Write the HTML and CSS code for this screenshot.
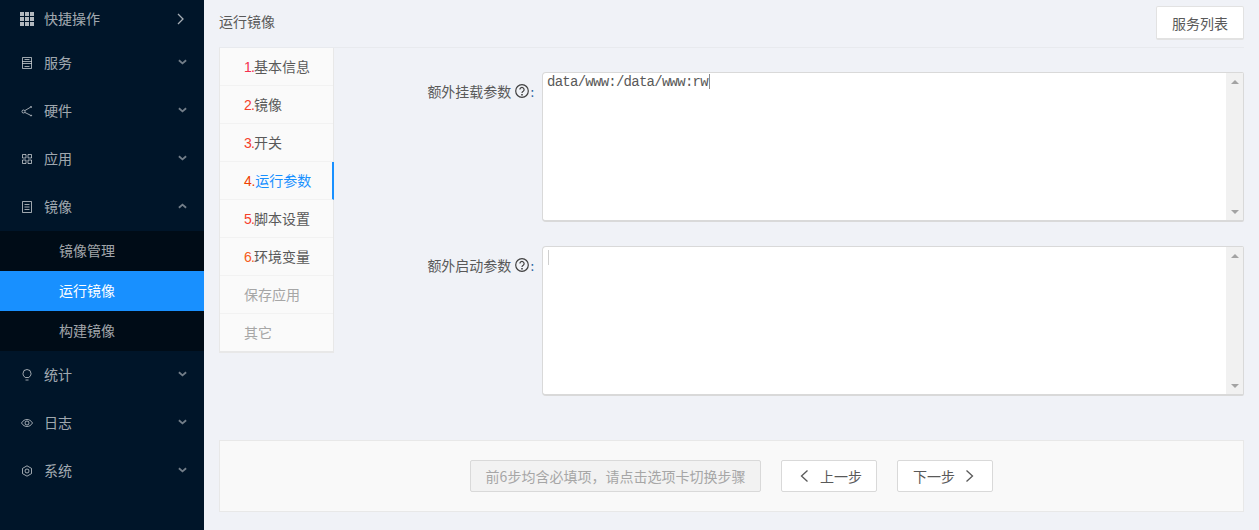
FILE: index.html
```html
<!DOCTYPE html>
<html lang="zh">
<head>
<meta charset="utf-8">
<title>运行镜像</title>
<link rel="stylesheet" href="styles.css">
</head>
<body>
<div class="app">
  <aside class="sidebar">
    <ul class="menu">
      <li class="item">
        <svg class="ico ico-grid" viewBox="0 0 14 14"><path d="M0 0h4v4H0zM5 0h4v4H5zM10 0h4v4h-4zM0 5h4v4H0zM5 5h4v4H5zM10 5h4v4h-4zM0 10h4v4H0zM5 10h4v4H5zM10 10h4v4h-4z"/></svg>
        <span class="label">快捷操作</span>
        <svg class="chev-right" viewBox="0 0 8 12"><path d="M1 1l5 5-5 5"/></svg>
      </li>
      <li class="item">
        <svg class="ico" viewBox="0 0 12 12"><path d="M1.500 .500h9v11h-9zM1.500 4.500h9M1.500 6.500h9M3.500 2.500h5M3.500 9.500h5"/></svg>
        <span class="label">服务</span>
        <svg class="chev" viewBox="0 0 10 6"><path d="M1 1l4 3.500L9 1"/></svg>
      </li>
      <li class="item">
        <svg class="ico" viewBox="0 0 12 12"><circle cx="2.500" cy="6.500" r="1.500"/><path d="M4 5.500l5-3M4 7.500l5 2.500"/><circle cx="10" cy="2" r=".6"/><circle cx="10" cy="10.500" r=".6"/></svg>
        <span class="label">硬件</span>
        <svg class="chev" viewBox="0 0 10 6"><path d="M1 1l4 3.500L9 1"/></svg>
      </li>
      <li class="item">
        <svg class="ico" viewBox="0 0 12 12"><path d="M1.500 1.500h3.500v3.500H1.500zM7 1.500h3.500v3.500H7zM1.500 7h3.500v3.500H1.500zM7 7h3.500v3.500H7z"/></svg>
        <span class="label">应用</span>
        <svg class="chev" viewBox="0 0 10 6"><path d="M1 1l4 3.500L9 1"/></svg>
      </li>
      <li class="item">
        <svg class="ico" viewBox="0 0 12 12"><path d="M1.500 .500h9v11h-9zM3.500 3.500h5M3.500 6h5M3.500 8.500h5"/></svg>
        <span class="label">镜像</span>
        <svg class="chev" viewBox="0 0 10 6"><path d="M1 5l4-3.500L9 5"/></svg>
      </li>
      <li class="sub">
        <a class="sub-item">镜像管理</a>
        <a class="sub-item sub-active">运行镜像</a>
        <a class="sub-item">构建镜像</a>
      </li>
      <li class="item">
        <svg class="ico" viewBox="0 0 12 12"><path d="M4.200 8.500C3 7.500 2 6.500 2 4.500a4 4 0 0 1 8 0c0 2-1 3-2.200 4zM4.500 11h3"/></svg>
        <span class="label">统计</span>
        <svg class="chev" viewBox="0 0 10 6"><path d="M1 1l4 3.500L9 1"/></svg>
      </li>
      <li class="item">
        <svg class="ico" viewBox="0 0 12 12"><path d="M.500 6C2 3.500 4 2.500 6 2.500S10 3.500 11.500 6C10 8.500 8 9.500 6 9.500S2 8.500 .500 6z"/><circle cx="6" cy="6" r="2"/></svg>
        <span class="label">日志</span>
        <svg class="chev" viewBox="0 0 10 6"><path d="M1 1l4 3.500L9 1"/></svg>
      </li>
      <li class="item">
        <svg class="ico" viewBox="0 0 12 12"><path d="M6 .800l4.500 2.600v5.200L6 11.200 1.500 8.600V3.400z"/><circle cx="6" cy="6" r="2"/></svg>
        <span class="label">系统</span>
        <svg class="chev" viewBox="0 0 10 6"><path d="M1 1l4 3.500L9 1"/></svg>
      </li>
    </ul>
  </aside>
  <main class="main">
    <header class="head">
      <span class="title">运行镜像</span>
      <button class="btn btn-list">服务列表</button>
    </header>
    <section class="body">
      <nav class="tabs">
        <a class="tab"><i class="n1">1.</i>基本信息</a>
        <a class="tab"><i class="n2">2.</i>镜像</a>
        <a class="tab"><i class="n2">3.</i>开关</a>
        <a class="tab tab-active"><i class="n4">4.</i>运行参数</a>
        <a class="tab"><i class="n2">5.</i>脚本设置</a>
        <a class="tab"><i class="n6">6.</i>环境变量</a>
        <a class="tab tab-muted">保存应用</a>
        <a class="tab tab-muted">其它</a>
      </nav>
      <form class="form">
        <div class="row">
          <div class="field-label"><span>额外挂载参数</span><svg class="help" viewBox="0 0 14 14"><circle cx="7" cy="7" r="6.300"/><path d="M4.900 5.600a2.100 2.100 0 1 1 3.300 1.700c-.8.500-1.200.8-1.200 1.700"/><path class="dot" d="M6.200 10h1.600v1.500H6.200z"/></svg><span class="colon">:</span></div>
          <div class="area">
            <div class="area-text">data/www:/data/www:rw<span class="caret"></span></div>
            <div class="bar"><span class="up"></span><span class="down"></span></div>
          </div>
        </div>
        <div class="row">
          <div class="field-label"><span>额外启动参数</span><svg class="help" viewBox="0 0 14 14"><circle cx="7" cy="7" r="6.300"/><path d="M4.900 5.600a2.100 2.100 0 1 1 3.300 1.700c-.8.500-1.200.8-1.200 1.700"/><path class="dot" d="M6.200 10h1.600v1.500H6.200z"/></svg><span class="colon">:</span></div>
          <div class="area">
            <div class="area-text"><span class="caret caret-empty"></span></div>
            <div class="bar"><span class="up"></span><span class="down"></span></div>
          </div>
        </div>
      </form>
    </section>
    <footer class="foot">
      <button class="btn btn-disabled">前6步均含必填项，请点击选项卡切换步骤</button>
      <button class="btn btn-step btn-prev"><svg class="step-ico" viewBox="0 0 8 12"><path d="M7.500 .500L1.500 6l6 5.500"/></svg>上一步</button>
      <button class="btn btn-step btn-next">下一步<svg class="step-ico" viewBox="0 0 8 12"><path d="M.500 .500l6 5.500-6 5.500"/></svg></button>
    </footer>
  </main>
</div>
</body>
</html>
```

FILE: styles.css
```css
* { box-sizing: border-box; }
html, body { margin: 0; padding: 0; height: 530px; overflow: hidden; }
body { font-family: "Noto Sans CJK SC", "Liberation Sans", sans-serif; font-size: 14px; background: #f0f2f7; color: #595959; }
.app { display: flex; height: 530px; }

.sidebar { width: 204px; flex: none; background: #001529; overflow: hidden; }
.menu { list-style: none; margin: -5px 0 0; padding: 0; }
.item { display: flex; align-items: center; height: 40px; margin: 0 0 8px; padding-left: 20px; color: rgba(255,255,255,.65); position: relative; }
.menu > .item:first-child { margin: 4px 0; }
.ico { width: 12px; height: 12px; margin: 0 11px 0 1px; fill: none; stroke: rgba(255,255,255,.62); stroke-width: 1; flex: none; }
.ico-grid { width: 14px; height: 14px; margin: 0 10px 0 0; fill: rgba(255,255,255,.7); stroke: none; }
.label { line-height: 38px; height: 40px; }
.chev { position: absolute; left: 178px; top: 16px; width: 9px; height: 6px; fill: none; stroke: rgba(255,255,255,.45); stroke-width: 2; }
.chev-right { position: absolute; left: 177px; top: 14px; width: 8px; height: 12px; fill: none; stroke: rgba(255,255,255,.65); stroke-width: 1.300; }

.sub { background: #000c17; margin: -4px 0 4px; display: block; }
.sub-item { display: block; height: 40px; line-height: 38px; padding-left: 59px; color: rgba(255,255,255,.65); }
.sub-active { background: #1890ff; color: #fff; }

.main { flex: 1; min-width: 0; padding: 0 15px; display: flex; flex-direction: column; }
.head { display: flex; justify-content: space-between; align-items: flex-start; height: 48px; padding-top: 6px; border-bottom: 1px solid #e8eaee; }
.title { line-height: 30px; color: #595959; font-size: 14px; }
.btn { font-family: inherit; font-size: 14px; background: #fff; border: 1px solid #d9d9d9; color: #595959; padding: 0; border-radius: 2px; }
.btn-list { width: 88px; height: 34px; border-width: 1px 1px 2px 1px; border-color: #e2e2e2; line-height: 30px; }

.body { display: flex; height: 392px; }
.tabs { width: 115px; height: 305px; flex: none; background: #fafafa; border: 1px solid #e8e8e8; border-top: 0; border-bottom-width: 2px; display: flex; flex-direction: column; }
.tab { display: block; height: 38px; line-height: 37px; padding-left: 24px; color: #595959; border-bottom: 1px solid #f2f2f2; flex: none; }
.tab:last-child { border-bottom: 0; height: 37px; }
.tab i { font-style: normal; font-family: "Liberation Sans", sans-serif; letter-spacing: -.8px; }
.n1 { color: #f5304f; }
.n2 { color: #f5402a; }
.tab .n4 { color: #f04000; letter-spacing: -.2px; }
.n6 { color: #f55a20; }
.tab-active { color: #1890ff; border-right: 2px solid #1890ff; margin-right: -1px; }
.tab-muted { color: #a6a6a6; }

.form { flex: 1; padding-top: 24px; display: flex; flex-direction: column; gap: 24px; min-width: 0; }
.row { display: flex; height: 150px; }
.field-label { width: 208px; flex: none; display: flex; align-items: center; justify-content: flex-end; height: 38px; color: #595959; white-space: nowrap; }
.help { width: 14px; height: 14px; margin: 0 1px 0 4px; fill: none; stroke: #404040; stroke-width: 1.200; flex: none; }
.help .dot { fill: #404040; stroke: none; }
.colon { color: #1d5fa0; margin-right: 8px; font-size: 13px; }
.area { flex: 1; display: flex; background: #fff; border: 1px solid #d9d9d9; border-width: 1px 1px 2px 1px; border-radius: 4px 2px 2px 4px; min-width: 0; }
.area-text { flex: 1; padding: 0 4px; font-family: "Liberation Mono", monospace; font-size: 14px; letter-spacing: -.74px; line-height: 18px; color: #595959; }
.caret { display: inline-block; width: 1px; height: 15px; background: #8c8c8c; vertical-align: -3px; margin-left: 1px; }
.caret-empty { background: #d0d0d0; margin: 3px 0 0 1px; vertical-align: top; }
.bar { width: 17px; flex: none; background: #f1f1f1; display: flex; flex-direction: column; justify-content: space-between; align-items: center; padding: 7px 0 6px; }
.up, .down { display: block; width: 0; height: 0; border-left: 4px solid transparent; border-right: 4px solid transparent; }
.up { border-bottom: 4px solid #a3a3a3; }
.down { border-top: 4px solid #a3a3a3; }

.foot { height: 72px; background: #f9f9f9; border: 1px solid #e8e8e8; display: flex; align-items: center; justify-content: center; gap: 20px; }
.btn-disabled { width: 291px; height: 32px; background: #f2f2f2; color: #a6a6a6; border-color: #d9d9d9; }
.btn-step { width: 96px; height: 32px; display: flex; align-items: center; color: #595959; }
.step-ico { width: 8px; height: 12px; fill: none; stroke: #595959; stroke-width: 1.300; flex: none; }
.btn-prev { padding-left: 18px; }
.btn-prev .step-ico { margin-right: 12px; }
.btn-next { padding-left: 15px; }
.btn-next .step-ico { margin-left: 11px; }
```
